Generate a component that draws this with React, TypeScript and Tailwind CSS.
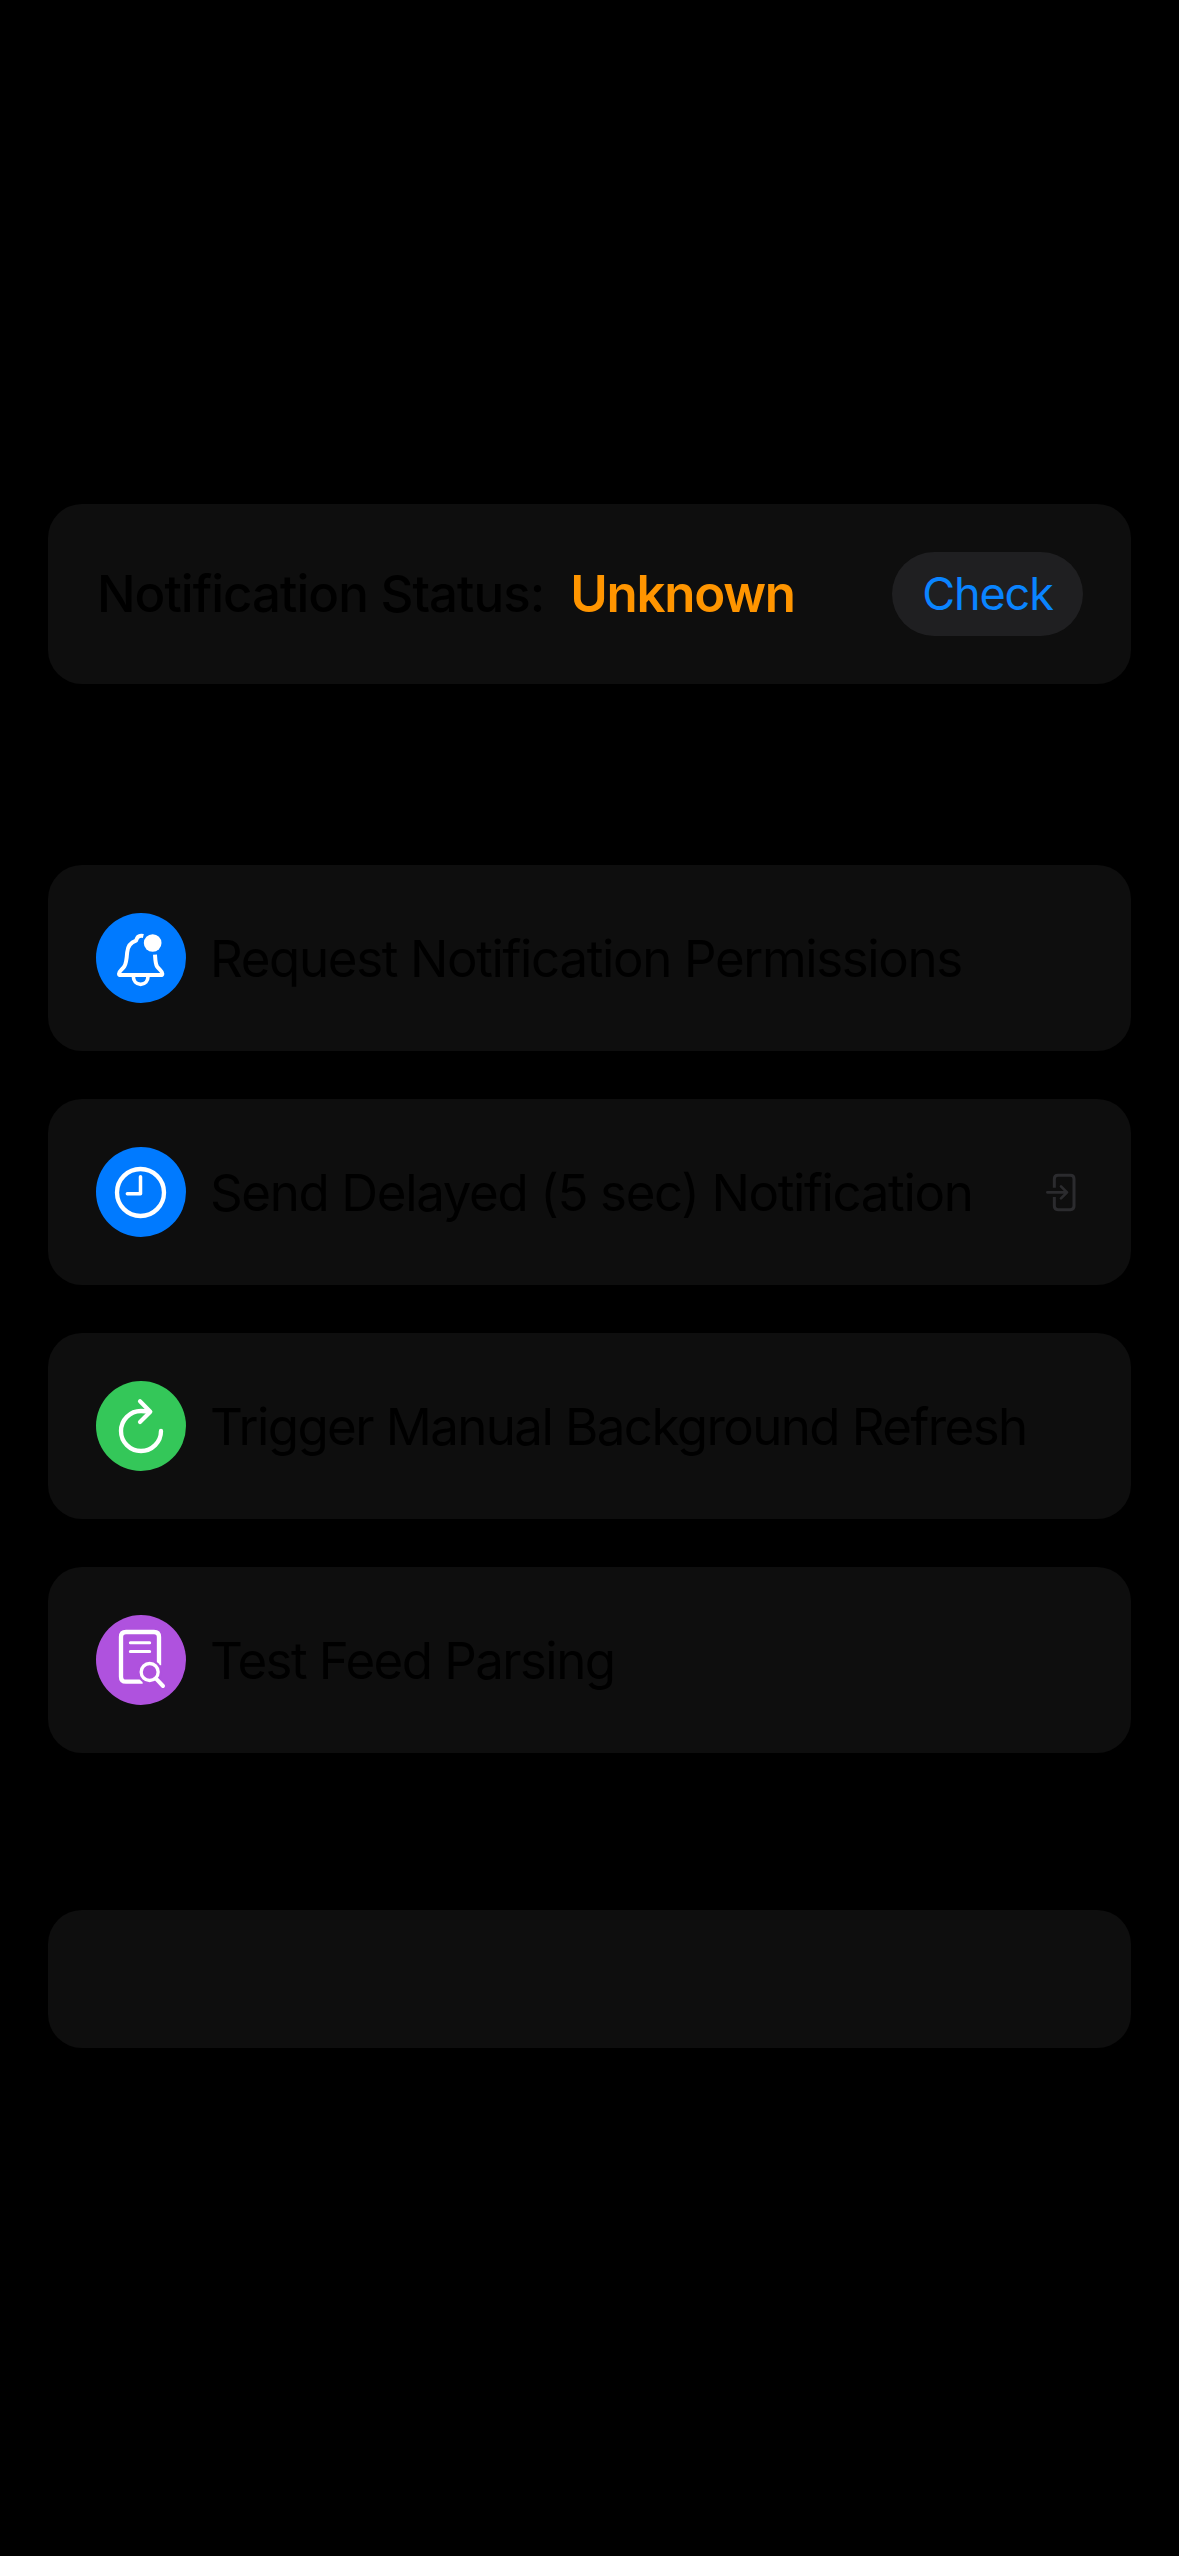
import type { ReactNode } from "react";

function BellBadgeIcon() {
  return (
    <svg viewBox="48 39 270 270" className="size-full" fill="none" stroke="#fff" strokeLinecap="round" strokeLinejoin="round">
      <path
        d="M190 108C178 105 171 111 168 122C153 127 143 140 141.500 157C140 178 139 190 133 199C127 208 117 213 117 221Q117 225 122 225H242Q247 225 247 221C247 213 237 208 231 199C226 191 226 179 225 164"
        strokeWidth="12"
        strokeLinecap="butt"
      />
      <path d="M160 229C160 243 169 253 182 253S204 243 204 229" strokeWidth="11" strokeLinecap="butt" />
      <circle cx="218" cy="129" r="26.500" fill="#fff" stroke="none" />
    </svg>
  );
}

function ClockIcon() {
  return (
    <svg viewBox="48 39 270 270" className="size-full" fill="none" stroke="#fff" strokeLinecap="round" strokeLinejoin="round">
      <circle cx="181.500" cy="175.500" r="70.5" strokeWidth="13" />
      <path d="M181.500 128V179H142" strokeWidth="10.500" />
    </svg>
  );
}

function RefreshIcon() {
  return (
    <svg viewBox="48 39 270 270" className="size-full" fill="none" stroke="#fff" strokeLinecap="round" strokeLinejoin="round">
      <path d="M243 189A60 60 0 1 1 183 129Q197 129 207 131" strokeWidth="13" />
      <path d="M180 100L211 131L180 162" strokeWidth="12.500" />
    </svg>
  );
}

function DocumentSearchIcon() {
  return (
    <svg viewBox="48 45 270 270" className="size-full" fill="none" stroke="#fff" strokeLinecap="round" strokeLinejoin="round">
      <path d="M237 196V111Q237 96 222 96H138Q123 96 123 111V230Q123 245 138 245H188" strokeWidth="13" strokeLinecap="butt" />
      <path d="M151 128.500H209M151 154.500H209" strokeWidth="9" />
      <path d="M209 216L249 258" stroke="#af52de" strokeWidth="22" strokeLinecap="butt" />
      <circle cx="209" cy="216" r="37" fill="#af52de" stroke="none" />
      <circle cx="209" cy="216" r="25.500" strokeWidth="10" />
      <path d="M228 236L249 258" strokeWidth="12" />
    </svg>
  );
}

function EnterPhoneIcon() {
  return (
    <svg viewBox="33 24 126 144" className="h-12 w-[42px]" fill="none" stroke="#2b2b2e" strokeLinecap="round" strokeLinejoin="round">
      <path d="M73 83V57Q73 46 84 46H121Q132 46 132 57V138Q132 149 121 149H84Q73 149 73 138V111" strokeWidth="9" strokeLinecap="butt" />
      <path d="M52 97H111M93 79L111 97L93 115" strokeWidth="8" />
    </svg>
  );
}

type Action = {
  label: string;
  labelClass: string;
  circleClass: string;
  icon: ReactNode;
  trailing?: ReactNode;
};

const actions: Action[] = [
  { label: "Request Notification Permissions", labelClass: "tracking-[-1.36px]", circleClass: "bg-[#007aff]", icon: <BellBadgeIcon /> },
  { label: "Send Delayed (5 sec) Notification", labelClass: "tracking-[-1.36px]", circleClass: "bg-[#007aff]", icon: <ClockIcon />, trailing: <EnterPhoneIcon /> },
  { label: "Trigger Manual Background Refresh", labelClass: "tracking-[-1.57px]", circleClass: "bg-[#34c759]", icon: <RefreshIcon /> },
  { label: "Test Feed Parsing", labelClass: "tracking-[-1.55px]", circleClass: "bg-[#af52de]", icon: <DocumentSearchIcon /> },
];

function ActionCard({ label, labelClass, circleClass, icon, trailing }: Action) {
  return (
    <button className="flex h-[186px] w-full items-center rounded-[34px] bg-[#0e0e0e] px-12 text-left">
      <span className={`size-[90px] shrink-0 rounded-full ${circleClass}`}>{icon}</span>
      <span className={`ml-6 grow whitespace-nowrap pt-px text-[51px] leading-[60px] text-black ${labelClass}`}>{label}</span>
      {trailing}
    </button>
  );
}

export default function App() {
  return (
    <main className="flex h-[2556px] w-[1179px] flex-col bg-black px-12 pt-[504px] font-['Inter',sans-serif]">
      <section className="flex h-[180px] items-center rounded-[34px] bg-[#0e0e0e] pr-12 pl-[49px] text-[51px] leading-[60px] font-medium">
        <span className="whitespace-nowrap tracking-[-0.97px] text-black">Notification Status:</span>
        <span className="ml-[26px] whitespace-nowrap font-semibold tracking-[-1.25px] text-[#ff9500]">Unknown</span>
        <button className="ml-auto flex h-[84px] w-[191px] items-center justify-center rounded-full bg-[#1f1f21] text-[45px] font-normal tracking-[-1.1px] text-[#0a84ff]">
          Check
        </button>
      </section>
      <section className="mt-[181px] flex flex-col gap-12">
        {actions.map((action) => (
          <ActionCard key={action.label} {...action} />
        ))}
      </section>
      <section className="mt-[157px] h-[138px] rounded-[34px] bg-[#0e0e0e]" />
    </main>
  );
}
